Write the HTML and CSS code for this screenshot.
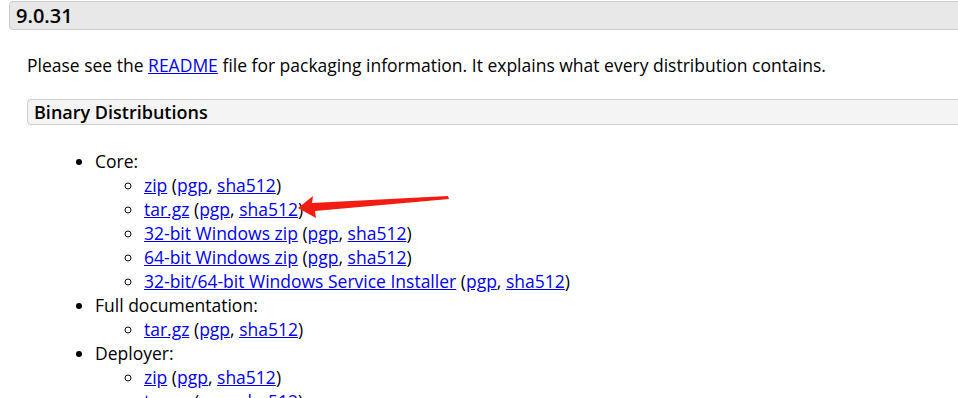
FILE: index.html
```html
<!DOCTYPE html>
<html lang="en">
<head>
    <meta charset="UTF-8">
    <title>Apache Tomcat 9 Downloads</title>
    <link rel="stylesheet" href="styles.css">
</head>
<body>
    <div class="section">
        <h3>9.0.31</h3>
        <div class="section-body">
            <p>Please see the <a href="#">README</a> file for packaging information. It explains what every distribution contains.</p>
            <div class="subsection">
                <h4>Binary Distributions</h4>
                <ul class="dist">
                    <li>Core:
                        <ul>
                            <li><a href="#">zip</a> (<a href="#">pgp</a>, <a href="#">sha512</a>)</li>
                            <li><a href="#">tar.gz</a> (<a href="#">pgp</a>, <a href="#">sha512</a>)</li>
                            <li><a href="#">32-bit Windows zip</a> (<a href="#">pgp</a>, <a href="#">sha512</a>)</li>
                            <li><a href="#">64-bit Windows zip</a> (<a href="#">pgp</a>, <a href="#">sha512</a>)</li>
                            <li><a href="#">32-bit/64-bit Windows Service Installer</a> (<a href="#">pgp</a>, <a href="#">sha512</a>)</li>
                        </ul>
                    </li>
                    <li>Full documentation:
                        <ul>
                            <li><a href="#">tar.gz</a> (<a href="#">pgp</a>, <a href="#">sha512</a>)</li>
                        </ul>
                    </li>
                    <li>Deployer:
                        <ul>
                            <li><a href="#">zip</a> (<a href="#">pgp</a>, <a href="#">sha512</a>)</li>
                            <li><a href="#">tar.gz</a> (<a href="#">pgp</a>, <a href="#">sha512</a>)</li>
                        </ul>
                    </li>
                </ul>
            </div>
        </div>
    </div>
    <!-- annotation arrow drawn over the page -->
    <svg class="arrow" width="958" height="398" viewBox="0 0 958 398">
        <polygon points="298,208 313,196 312,203 448,196 449,199 315,211 316,218" fill="#f21c12"/>
    </svg>
</body>
</html>
```

FILE: styles.css
```css
body {
    font-family: "Open Sans", "Noto Sans", sans-serif;
    font-size: 17.5px;
    line-height: 24px;
    color: #000;
    margin: 0;
    padding: 1px 0 0 9px;
    overflow: hidden;
    width: 1100px;
}
a {
    color: #0000ee;
}
h3 {
    margin: 0;
    font-size: 20px;
    font-weight: 600;
    line-height: 27px;
    padding: 0 6px;
    background: #e8e8e8;
    border: 1px solid #ccc;
    border-radius: 4px 0 0 4px;
}
.section-body {
    padding-left: 18px;
}
.section-body p {
    margin: 23px 0 22px 0;
}
h4 {
    margin: 0;
    font-size: 18px;
    font-weight: 600;
    line-height: 24px;
    padding: 0 6px;
    background: #f4f4f4;
    border: 1px solid #ccc;
    border-radius: 4px 0 0 4px;
}
.dist {
    margin: 24px 0 0 0;
    padding-left: 68px;
}
.dist ul {
    margin: 0;
    padding-left: 49px;
    list-style-type: circle;
}
.arrow {
    position: absolute;
    left: 0;
    top: 0;
}
```
